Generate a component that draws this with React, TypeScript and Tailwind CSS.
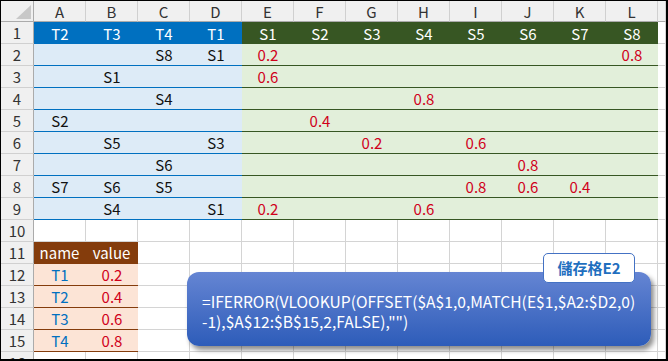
import React from 'react';

const cols = ['A', 'B', 'C', 'D', 'E', 'F', 'G', 'H', 'I', 'J', 'K', 'L'];

// rows 1..9 of the colored block
const block: string[][] = [
  ['T2', 'T3', 'T4', 'T1', 'S1', 'S2', 'S3', 'S4', 'S5', 'S6', 'S7', 'S8'],
  ['', '', 'S8', 'S1', '0.2', '', '', '', '', '', '', '0.8'],
  ['', 'S1', '', '', '0.6', '', '', '', '', '', '', ''],
  ['', '', 'S4', '', '', '', '', '0.8', '', '', '', ''],
  ['S2', '', '', '', '', '0.4', '', '', '', '', '', ''],
  ['', 'S5', '', 'S3', '', '', '0.2', '', '0.6', '', '', ''],
  ['', '', 'S6', '', '', '', '', '', '', '0.8', '', ''],
  ['S7', 'S6', 'S5', '', '', '', '', '', '0.8', '0.6', '0.4', ''],
  ['', 'S4', '', 'S1', '0.2', '', '', '0.6', '', '', '', ''],
];

const lookup = [
  ['T1', '0.2'],
  ['T2', '0.4'],
  ['T3', '0.6'],
  ['T4', '0.8'],
];

const plain = 'border-r border-b border-[#d4d4d4] bg-white';

const cellClass = (r: number, c: number) => {
  if (c > 11) return plain;
  if (r === 1) {
    return c < 4 ? 'bg-[#0070c0] text-white' : 'bg-[#375623] text-white';
  }
  if (r >= 2 && r <= 9) {
    return c < 4
      ? 'bg-[#ddebf7] border-b border-[#0070c0] text-[#111]'
      : 'bg-[#e2efda] border-b border-[#375623] text-[#d0001a]';
  }
  if (r === 11 && c < 2) return 'bg-[#843c0c] text-white border-r border-b border-[#843c0c]';
  if (r >= 12 && r <= 15 && c < 2) {
    return c === 0
      ? 'bg-[#fce4d6] border-b border-[#843c0c] text-[#0070c0]'
      : 'bg-[#fce4d6] border-b border-[#843c0c] text-[#d0001a]';
  }
  return plain;
};

const cellText = (r: number, c: number) => {
  if (r >= 1 && r <= 9 && c < 12) return block[r - 1][c];
  if (r === 11 && c === 0) return 'name';
  if (r === 11 && c === 1) return 'value';
  if (r >= 12 && r <= 15 && c < 2) return lookup[r - 12][c];
  return '';
};

export default function App() {
  const rows = Array.from({ length: 16 }, (_, i) => i + 1);
  const allCols = Array.from({ length: 13 }, (_, i) => i);

  return (
    <div
      className="relative w-[668px] h-[361px] overflow-hidden border-l border-t border-r-2 border-b-2 border-black bg-white text-[15px]"
      style={{ fontFamily: '"Noto Sans CJK TC", "Noto Sans", sans-serif' }}
    >
      <div className="grid grid-cols-[33px_repeat(12,52px)_1fr] grid-rows-[21px_repeat(16,22px)]">
        {/* corner */}
        <div className="relative bg-[#f0f0f0] border-r border-b border-[#ababab]">
          <svg className="absolute right-[2px] bottom-[2px]" width="15" height="14" viewBox="0 0 15 14">
            <polygon points="15,0 15,14 0,14" fill="#c8c8c8" />
          </svg>
        </div>
        {allCols.map((c) => (
          <div
            key={`h${c}`}
            className="flex items-center justify-center bg-[#f0f0f0] border-r border-b border-r-[#d0d0d0] border-b-[#ababab] text-[#333] leading-none"
          >
            {cols[c] ?? ''}
          </div>
        ))}

        {rows.map((r) => (
          <React.Fragment key={r}>
            <div className="flex items-center justify-center bg-[#f0f0f0] border-r border-b border-r-[#ababab] border-b-[#d0d0d0] text-[#333] leading-none">
              {r}
            </div>
            {allCols.map((c) => (
              <div key={c} className={`flex items-center justify-center leading-none ${cellClass(r, c)}`}>
                {cellText(r, c)}
              </div>
            ))}
          </React.Fragment>
        ))}
      </div>

      {/* formula callout */}
      <div className="absolute left-[186px] top-[271px] w-[464px] h-[74px] rounded-[12px] bg-linear-to-b from-[#6585d3] to-[#2d5cb9] shadow-[3px_4px_5px_rgba(0,0,0,0.45)] pl-[15px] pt-[19px] text-white text-[15.6px] leading-[20px]">
        <div>=IFERROR(VLOOKUP(OFFSET($A$1,0,MATCH(E$1,$A2:$D2,0)</div>
        <div>-1),$A$12:$B$15,2,FALSE),"")</div>
      </div>

      <div className="absolute left-[542px] top-[252px] w-[92px] h-[30px] rounded-[5px] bg-white border border-[#4472c4] flex items-center justify-center text-[#1f6fbf] font-bold text-[15px]">
        儲存格E2
      </div>
    </div>
  );
}
